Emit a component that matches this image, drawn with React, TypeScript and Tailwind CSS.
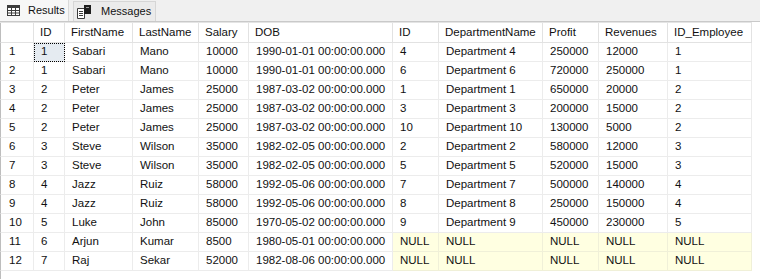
import React from "react";

const cols = [34, 31, 68, 66, 50, 144, 46, 104, 56, 69, 84];
const headers = ["", "ID", "FirstName", "LastName", "Salary", "DOB", "ID", "DepartmentName", "Profit", "Revenues", "ID_Employee"];

type Row = (string | number | null)[];
const rows: Row[] = [
  [1, 1, "Sabari", "Mano", 10000, "1990-01-01 00:00:00.000", 4, "Department 4", 250000, 12000, 1],
  [2, 1, "Sabari", "Mano", 10000, "1990-01-01 00:00:00.000", 6, "Department 6", 720000, 250000, 1],
  [3, 2, "Peter", "James", 25000, "1987-03-02 00:00:00.000", 1, "Department 1", 650000, 20000, 2],
  [4, 2, "Peter", "James", 25000, "1987-03-02 00:00:00.000", 3, "Department 3", 200000, 15000, 2],
  [5, 2, "Peter", "James", 25000, "1987-03-02 00:00:00.000", 10, "Department 10", 130000, 5000, 2],
  [6, 3, "Steve", "Wilson", 35000, "1982-02-05 00:00:00.000", 2, "Department 2", 580000, 12000, 3],
  [7, 3, "Steve", "Wilson", 35000, "1982-02-05 00:00:00.000", 5, "Department 5", 520000, 15000, 3],
  [8, 4, "Jazz", "Ruiz", 58000, "1992-05-06 00:00:00.000", 7, "Department 7", 500000, 140000, 4],
  [9, 4, "Jazz", "Ruiz", 58000, "1992-05-06 00:00:00.000", 8, "Department 8", 250000, 150000, 4],
  [10, 5, "Luke", "John", 85000, "1970-05-02 00:00:00.000", 9, "Department 9", 450000, 230000, 5],
  [11, 6, "Arjun", "Kumar", 8500, "1980-05-01 00:00:00.000", null, null, null, null, null],
  [12, 7, "Raj", "Sekar", 52000, "1982-08-06 00:00:00.000", null, null, null, null, null],
];

function GridIcon() {
  return (
    <svg width="13" height="11" viewBox="0 0 13 11" className="block">
      <rect x="0.5" y="0.5" width="12" height="10" fill="#fff" stroke="#3c3c3c" />
      <rect x="0.5" y="0.5" width="12" height="2.5" fill="#3c3c3c" />
      <line x1="4.5" y1="0.5" x2="4.5" y2="10.5" stroke="#3c3c3c" />
      <line x1="8.5" y1="0.5" x2="8.5" y2="10.5" stroke="#3c3c3c" />
      <line x1="0.5" y1="5.5" x2="12.5" y2="5.5" stroke="#3c3c3c" />
      <line x1="0.5" y1="8" x2="12.5" y2="8" stroke="#3c3c3c" />
    </svg>
  );
}

function MessagesIcon() {
  return (
    <svg width="14" height="14" viewBox="0 0 14 14" className="block">
      <path d="M0.5 3.5 H7.5 V13.5 H0.5 Z" fill="#fff" stroke="#3c3c3c" />
      <line x1="2" y1="6.5" x2="6" y2="6.5" stroke="#3c3c3c" />
      <line x1="2" y1="8.5" x2="6" y2="8.5" stroke="#3c3c3c" />
      <line x1="2" y1="10.5" x2="6" y2="10.5" stroke="#3c3c3c" />
      <rect x="7.5" y="0.5" width="6" height="8" fill="#1e1e1e" stroke="#1e1e1e" />
      <line x1="9" y1="2.5" x2="12" y2="2.5" stroke="#9a9a9a" />
    </svg>
  );
}

export default function App() {
  return (
    <div className="w-[760px] h-[279px] overflow-hidden bg-white text-[#111] font-['Liberation_Sans',Arial,sans-serif]">
      {/* Tab strip */}
      <div className="h-[22px] bg-[#f0f0f0] border-b border-[#c9c9c9] flex items-stretch text-[11px]">
        <div className="w-[69px] bg-[#f7f7f7] border-r border-[#d9d9d9] flex items-center pl-[7px] gap-[8px]">
          <GridIcon />
          <span className="leading-none">Results</span>
        </div>
        <div className="ml-[4px] mt-[1px] w-[83px] bg-[#ebebeb] border border-b-0 border-[#d6d6d6] flex items-center pl-[3px] gap-[10px]">
          <MessagesIcon />
          <span className="leading-none">Messages</span>
        </div>
      </div>
      {/* Grid */}
      <div
        className="grid w-[752px] text-[11.5px] border-t border-[#e4e4e4]"
        style={{ gridTemplateColumns: cols.map((c) => `${c}px`).join(" ") }}
      >
        {headers.map((h, i) => (
          <div
            key={"h" + i}
            className={
              "h-[20px] border-r border-b border-[#e2e2e2] pl-[6px] flex items-center whitespace-nowrap overflow-hidden" +
              (i === 0 ? " border-l border-l-[#bdbdbd]" : "")
            }
          >
            {h}
          </div>
        ))}
        {rows.map((r, ri) =>
          r.map((v, ci) => {
            const isNull = v === null;
            const selected = ri === 0 && ci === 1;
            let cls =
              "h-[19px] border-r border-b pl-[7px] flex items-center whitespace-nowrap overflow-hidden";
            if (ci === 0) cls += " border-l border-l-[#bdbdbd] pl-[8px]";
            if (isNull) cls += " bg-[#ffffe1] border-[#f0f0d8]";
            else cls += " border-[#ececec]";
            if (selected) cls += " bg-[#e5ebf1] outline outline-1 outline-dotted outline-black -outline-offset-1";
            return (
              <div key={ri + "-" + ci} className={cls}>
                {isNull ? "NULL" : String(v)}
              </div>
            );
          })
        )}
      </div>
      <div className="h-[20px] w-[1px] bg-[#bdbdbd]" />
    </div>
  );
}
